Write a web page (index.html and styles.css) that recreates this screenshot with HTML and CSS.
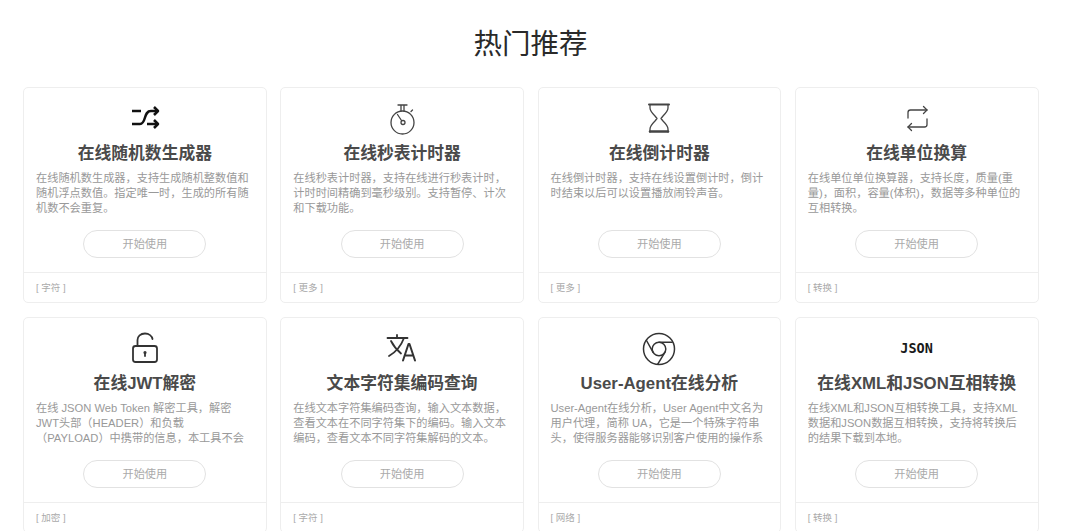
FILE: index.html
```html
<!DOCTYPE html>
<html lang="zh-CN">
<head>
  <meta charset="UTF-8">
  <title>热门推荐</title>
  <link rel="stylesheet" href="styles.css">
</head>
<body>
<h2 class="section-title">热门推荐</h2>
<div class="tool-grid">

  <div class="tool-card">
    <div class="tool-icon">
      <svg width="34" height="34" viewBox="0 0 34 34" class="icon-bold">
        <path d="M4 9h9"/>
        <path d="M4 22h8c3 0 4-3 5-6.500S19 9 23 9h7"/>
        <path d="M19 22h11"/>
        <path d="M26 5l4 4-4 4M26 18l4 4-4 4"/>
      </svg>
    </div>
    <h3 class="tool-name">在线随机数生成器</h3>
    <p class="tool-desc">在线随机数生成器，支持生成随机整数值和随机浮点数值。指定唯一时，生成的所有随机数不会重复。</p>
    <a class="tool-btn">开始使用</a>
    <div class="tool-tag">[ 字符 ]</div>
  </div>

  <div class="tool-card">
    <div class="tool-icon">
      <svg width="34" height="34" viewBox="0 0 34 34">
        <circle cx="17.500" cy="20.500" r="11.500"/>
        <path d="M13 3h9M16 3v6M19 3v6M26 9.500l1.500-1.500"/>
        <path d="M12.500 12.500l4 6"/>
        <circle cx="18" cy="20.500" r="2"/>
      </svg>
    </div>
    <h3 class="tool-name">在线秒表计时器</h3>
    <p class="tool-desc">在线秒表计时器，支持在线进行秒表计时，计时时间精确到毫秒级别。支持暂停、计次和下载功能。</p>
    <a class="tool-btn">开始使用</a>
    <div class="tool-tag">[ 更多 ]</div>
  </div>

  <div class="tool-card">
    <div class="tool-icon">
      <svg width="34" height="34" viewBox="0 0 34 34">
        <path d="M7 2.500h20" class="icon-mid"/>
        <path d="M8 3v3c0 3 2 5 5 8l2 2.500-2 2.500c-3 3-5 5-5 8v3M26 3v3c0 3-2 5-5 8l-2 2.500 2 2.500c3 3 5 5 5 8v3"/>
        <path d="M8 29.500h18" class="icon-thick"/>
      </svg>
    </div>
    <h3 class="tool-name">在线倒计时器</h3>
    <p class="tool-desc">在线倒计时器，支持在线设置倒计时，倒计时结束以后可以设置播放闹铃声音。</p>
    <a class="tool-btn">开始使用</a>
    <div class="tool-tag">[ 更多 ]</div>
  </div>

  <div class="tool-card">
    <div class="tool-icon">
      <svg width="34" height="34" viewBox="0 0 34 34">
        <path d="M8 16v-5.500C8 9 9 8 10.500 8H27"/>
        <path d="M23.500 4.500L27 8l-3.500 3.500"/>
        <path d="M27 17v5.500c0 1.500-1 2.500-2.500 2.500H8"/>
        <path d="M11.500 21.500L8 25l3.500 3.500"/>
      </svg>
    </div>
    <h3 class="tool-name">在线单位换算</h3>
    <p class="tool-desc">在线单位单位换算器，支持长度，质量(重量)，面积，容量(体积)，数据等多种单位的互相转换。</p>
    <a class="tool-btn">开始使用</a>
    <div class="tool-tag">[ 转换 ]</div>
  </div>

  <div class="tool-card">
    <div class="tool-icon">
      <svg width="34" height="34" viewBox="0 0 34 34" class="icon-lock">
        <rect x="5" y="14" width="24" height="16" rx="2.500"/>
        <path d="M9.500 14V8c0-3.800 3-6.500 7.500-6.500 4 0 7 2.500 7.500 5.500"/>
        <path d="M17 21v3"/>
        <circle cx="17" cy="20.500" r=".7"/>
      </svg>
    </div>
    <h3 class="tool-name">在线JWT解密</h3>
    <p class="tool-desc">在线 JSON Web Token 解密工具，解密 JWT头部（HEADER）和负载<br>（PAYLOAD）中携带的信息，本工具不会</p>
    <a class="tool-btn">开始使用</a>
    <div class="tool-tag">[ 加密 ]</div>
  </div>

  <div class="tool-card">
    <div class="tool-icon">
      <svg width="34" height="34" viewBox="0 0 34 34" class="icon-lock">
        <path d="M2.500 6h20M12 3v3"/>
        <path d="M4 24c7-4 12-10 15-18M6 9c2.500 5 6 9 10 12.500"/>
        <path d="M18 28.500L23.500 12h1L30 28.500M20 23.500h8" class="icon-mid"/>
      </svg>
    </div>
    <h3 class="tool-name">文本字符集编码查询</h3>
    <p class="tool-desc">在线文本字符集编码查询，输入文本数据，查看文本在不同字符集下的编码。输入文本编码，查看文本不同字符集解码的文本。</p>
    <a class="tool-btn">开始使用</a>
    <div class="tool-tag">[ 字符 ]</div>
  </div>

  <div class="tool-card">
    <div class="tool-icon">
      <svg width="34" height="34" viewBox="0 0 34 34" class="icon-chrome">
        <circle cx="17" cy="17" r="15.500"/>
        <circle cx="17" cy="17" r="6.800"/>
        <path d="M17 10.200h13.200M11.100 20.400L4.500 8.500M22.900 20.400L15.600 32.300"/>
      </svg>
    </div>
    <h3 class="tool-name">User-Agent在线分析</h3>
    <p class="tool-desc">User-Agent在线分析，User Agent中文名为用户代理，简称 UA，它是一个特殊字符串头，使得服务器能够识别客户使用的操作系</p>
    <a class="tool-btn">开始使用</a>
    <div class="tool-tag">[ 网络 ]</div>
  </div>

  <div class="tool-card">
    <div class="tool-icon">
      <span class="json-mark">JSON</span>
    </div>
    <h3 class="tool-name">在线XML和JSON互相转换</h3>
    <p class="tool-desc">在线XML和JSON互相转换工具，支持XML数据和JSON数据互相转换，支持将转换后的结果下载到本地。</p>
    <a class="tool-btn">开始使用</a>
    <div class="tool-tag">[ 转换 ]</div>
  </div>

</div>
</body>
</html>
```

FILE: styles.css
```css
*{padding: 0; margin: 0; box-sizing: border-box;}
html, body{
  height: 100%;
  overflow: hidden;
}
body{
  background-color: #fff;
  font-family: "Liberation Sans", "Noto Sans CJK SC", sans-serif;
}
.section-title{
  height: 87px;
  padding-top: 24px;
  padding-right: 19px;
  line-height: 40px;
  font-size: 28.500px;
  font-weight: 400;
  text-align: center;
  color: #2a2a2a;
}
.tool-grid{
  display: grid;
  grid-template-columns: repeat(4, 1fr);
  gap: 14px 13.500px;
  width: 1038.500px;
  padding-left: 23px;
}
.tool-card{
  display: flex;
  flex-direction: column;
  height: 216px;
  border: 1px solid #eee;
  border-radius: 5px;
  background-color: #fff;
}
.tool-icon{
  display: flex;
  align-items: center;
  justify-content: center;
  height: 34px;
  margin-top: 14px;
}
.tool-icon svg{
  fill: none;
  stroke: #444;
  stroke-width: 1.300;
  stroke-linecap: round;
  stroke-linejoin: round;
}
.tool-icon svg.icon-bold{
  stroke: #111;
  stroke-width: 2.500;
  stroke-linecap: butt;
}
.tool-icon svg.icon-lock{
  stroke: #333;
  stroke-width: 1.800;
}
.tool-icon svg.icon-chrome{
  stroke: #333;
  stroke-width: 1.500;
}
.tool-icon .icon-thick{
  stroke-width: 2.500;
}
.tool-icon .icon-mid{
  stroke-width: 2;
}
.json-mark{
  padding-bottom: 3px;
  font-family: "DejaVu Sans Mono", monospace;
  font-size: 13.500px;
  font-weight: 700;
  color: #1a1a1a;
}
.tool-name{
  margin-top: 6px;
  line-height: 24px;
  font-size: 16.800px;
  font-weight: 700;
  text-align: center;
  color: #4a4a4a;
}
.tool-desc{
  height: 45px;
  margin: 5px 12px 0;
  line-height: 15px;
  font-size: 11.200px;
  color: #999;
}
.tool-btn{
  display: block;
  width: 123px;
  height: 28px;
  margin: 14px auto 0;
  border: 1px solid #e2e2e2;
  border-radius: 14px;
  line-height: 26px;
  font-size: 11.200px;
  text-align: center;
  color: #aaa;
}
.tool-tag{
  margin-top: 14px;
  padding-left: 12px;
  border-top: 1px solid #eee;
  line-height: 29px;
  font-size: 9.500px;
  color: #aaa;
}
```
